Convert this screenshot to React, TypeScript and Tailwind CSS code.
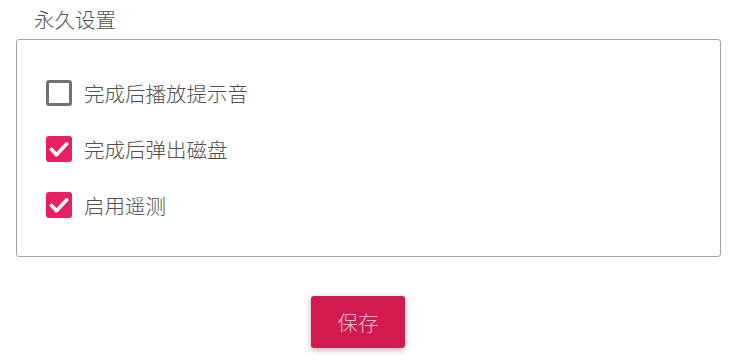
import React from "react";

function Check({ checked }: { checked: boolean }) {
  if (checked) {
    return (
      <div className="w-[26px] h-[26px] rounded-[3px] bg-[#e91e63] flex items-center justify-center shrink-0">
        <svg width="24" height="24" viewBox="0 0 24 24" fill="none">
          <path d="M4.5 12.5l5 5.2L19.8 6.8" stroke="white" strokeWidth="3.6" strokeLinecap="round" strokeLinejoin="round" />
        </svg>
      </div>
    );
  }
  return <div className="w-[26px] h-[26px] rounded-[3px] border-[3px] border-[#737373] bg-white shrink-0" />;
}

const rows = [
  { label: "完成后播放提示音", checked: false },
  { label: "完成后弹出磁盘", checked: true },
  { label: "启用遥测", checked: true },
];

export default function App() {
  return (
    <div
      className="w-[740px] h-[362px] bg-white overflow-hidden"
      style={{ fontFamily: '"Noto Sans CJK SC", "Noto Sans", sans-serif' }}
    >
      <div className="pl-[34px] pt-[5px] h-[39px] text-[20.5px] leading-[28px] text-[#505050] font-light">永久设置</div>
      <div className="ml-[16px] w-[705px] h-[218px] border border-[#a3a3a3] rounded-[3px] pt-[25px] pl-[29px]">
        {rows.map((r) => (
          <div key={r.label} className="h-[56px] flex items-center gap-[12px]">
            <Check checked={r.checked} />
            <span className="text-[20.5px] text-[#505050] font-light leading-none">{r.label}</span>
          </div>
        ))}
      </div>
      <div className="flex justify-center pr-[24px] mt-[39px]">
        <button className="w-[94px] h-[52px] rounded-[3px] bg-[#d01a50] text-[#f3bccd] text-[20.5px] font-light shadow-[0_2px_6px_rgba(0,0,0,0.3)]">
          保存
        </button>
      </div>
    </div>
  );
}
